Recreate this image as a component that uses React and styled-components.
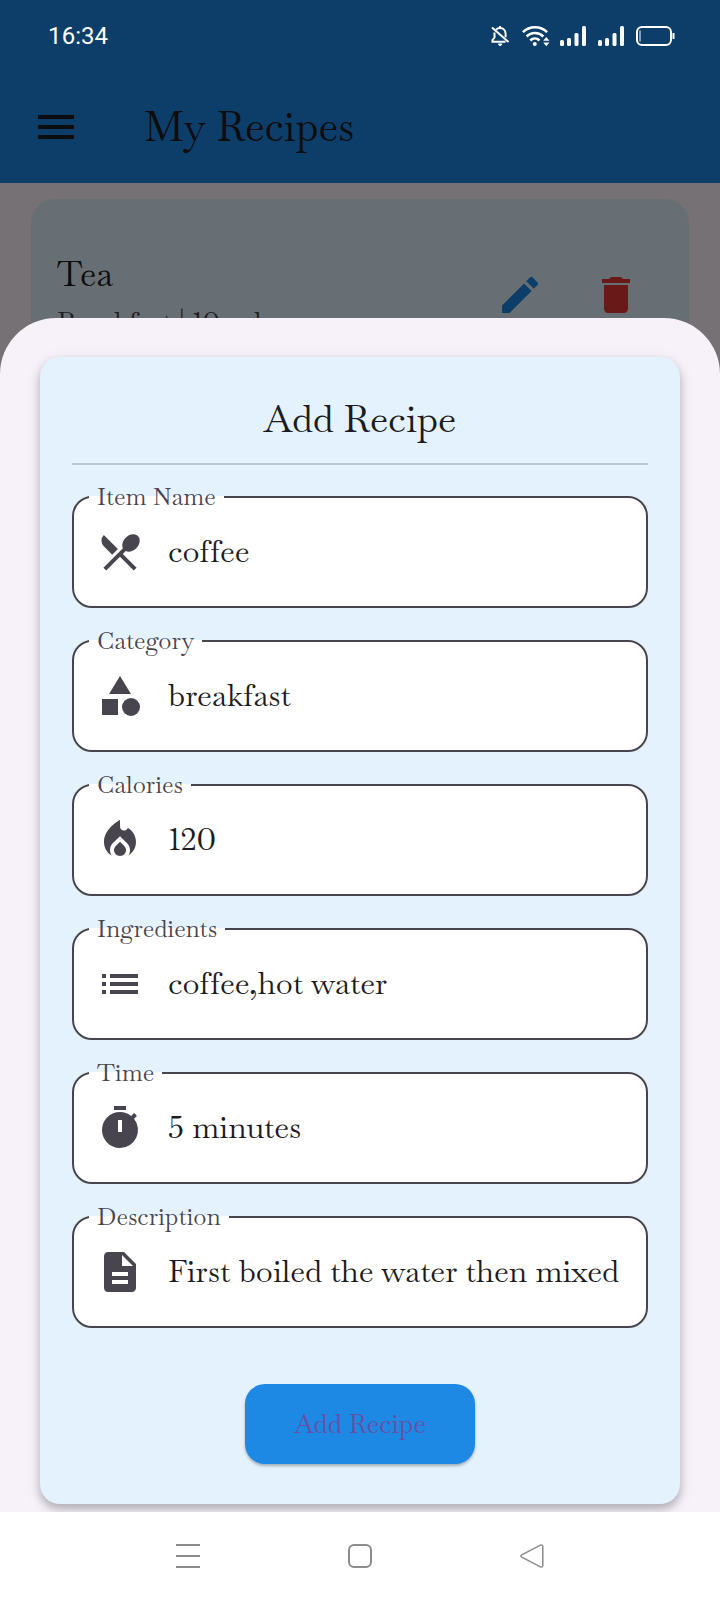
import React from "react";
import styled, { createGlobalStyle } from "styled-components";
import {
  MdCategory,
  MdDelete,
  MdDescription,
  MdEdit,
  MdList,
  MdLocalFireDepartment,
  MdMenu,
  MdRestaurantMenu,
  MdTimer,
} from "react-icons/md";

const serif = '"Baskervville", "Liberation Serif", serif';

const GlobalStyle = createGlobalStyle`
  *, *::before, *::after { box-sizing: border-box; }
  body { margin: 0; font-family: ${serif}; background: #ffffff; color: #1d1b20; }
  body, input, button { font-variant-ligatures: none; font-variant-numeric: lining-nums; }
`;

const Screen = styled.div`
  display: flex;
  flex-direction: column;
  min-height: 100vh;
`;

/* The page, its scrim, the sheet and the status bar share one grid cell. */
const Stage = styled.div`
  flex: 1;
  display: grid;
  grid-template-columns: minmax(0, 1fr);

  & > * { grid-area: 1 / 1; }
`;

const RecipesPage = styled.main`
  background: #fef7ff;
`;

const AppBar = styled.header`
  display: flex;
  align-items: center;
  gap: 64px;
  height: 183px;
  padding: 71px 32px 0;
  background: #1e88e5;
`;

const AppTitle = styled.h1`
  margin: 0;
  font-size: 41px;
  font-weight: 400;
  line-height: 48px;
`;

const IconButton = styled.button`
  display: flex;
  padding: 0;
  border: 0;
  background: none;
  font-size: 48px;
  color: ${({ $color }) => $color};
`;

const RecipeCard = styled.article`
  display: flex;
  align-items: center;
  gap: 48px;
  height: 192px;
  margin: 16px 31px;
  padding: 0 49px 0 26px;
  border-radius: 24px;
  background: #e3f2fd;
`;

const RecipeText = styled.div`
  flex: 1;
  align-self: flex-start;
  min-width: 0;
  padding-top: 53px;
`;

const RecipeName = styled.h2`
  margin: 0;
  font-size: 34px;
  font-weight: 400;
  line-height: 44px;
`;

const RecipeMeta = styled.p`
  margin: 4px 0 0;
  font-size: 28px;
  line-height: 44px;
  color: #49454f;
`;

const Scrim = styled.div`
  background: rgba(0, 0, 0, 0.54);
`;

const StatusBar = styled.div`
  align-self: start;
  display: flex;
  align-items: center;
  justify-content: space-between;
  height: 71px;
  padding: 0 45px 0 48px;
  color: #ffffff;
`;

const Clock = styled.time`
  font-family: Roboto, sans-serif;
  font-size: 24px;
  font-weight: 400;
`;

const StatusIcons = styled.div`
  display: flex;
  align-items: center;
  gap: 12px;

  svg { display: block; overflow: visible; }
`;

const Sheet = styled.section`
  margin-top: 318px;
  padding: 39px 40px 8px;
  border-radius: 56px 56px 0 0;
  background: #f7f2fa;
  overflow: hidden;
`;

const FormCard = styled.form`
  padding: 38px 32px 40px;
  border-radius: 20px;
  background: #e3f2fd;
  box-shadow: 0 5px 8px rgba(0, 0, 0, 0.22), 0 4px 16px rgba(0, 0, 0, 0.1);
`;

const FormTitle = styled.h2`
  margin: 0 0 20px;
  padding-bottom: 20px;
  border-bottom: 2px solid #bfc6d6;
  font-size: 38px;
  font-weight: 400;
  line-height: 48px;
  text-align: center;
`;

const Fields = styled.div`
  display: grid;
  gap: 21px;
`;

const Outline = styled.fieldset`
  min-width: 0;
  height: 123px;
  margin: 0;
  padding: 0 22px;
  border: 2px solid #49454f;
  border-radius: 20px;
  background: #ffffff;
`;

const Legend = styled.legend`
  margin-left: -7px;
  padding: 0 8px;
  font-size: 24px;
  line-height: 24px;
  color: #49454f;
`;

const InputRow = styled.div`
  display: flex;
  align-items: center;
  gap: 24px;
  padding-top: 19px;
  color: #49454f;

  svg { flex: none; }
`;

const TextInput = styled.input`
  flex: 1;
  min-width: 0;
  height: 48px;
  padding: 0 0 2px;
  border: 0;
  outline: 0;
  background: none;
  font-family: ${serif};
  font-size: 31px;
  color: #1d1b20;
`;

const SubmitButton = styled.button`
  display: block;
  width: 230px;
  height: 80px;
  margin: 56px auto 0;
  border: 0;
  border-radius: 20px;
  background: #1e88e5;
  box-shadow: 0 2px 3px rgba(0, 0, 0, 0.28);
  font-family: ${serif};
  font-size: 26px;
  color: #6750a4;
`;

const NavBar = styled.nav`
  display: flex;
  align-items: center;
  justify-content: center;
  gap: 148px;
  height: 88px;
  background: #ffffff;
`;

const NavButton = styled.button`
  display: flex;
  padding: 0;
  border: 0;
  background: none;
  color: #8c8c8c;
`;

const BellOff = () => (
  <svg width="20" height="20" viewBox="0 0 20 20" fill="none" stroke="currentColor" strokeWidth="2">
    <path d="M2 1.5 18.5 16" />
    <path d="M6 3.6C7.1 2.5 8.4 2 10 2c3.400 0 5.600 2.400 5.600 5.800v3.400" />
    <path d="M4.500 6.500v5L2.500 14v1.800h13" />
    <path d="M10 0v2" />
    <path d="M8.300 18h3.800L10.200 20z" fill="currentColor" strokeWidth="1" />
  </svg>
);

const Wifi = () => (
  <svg width="26" height="20" viewBox="0 0 26 20" fill="none" stroke="currentColor" strokeWidth="2.600">
    <path d="M.9 6.200C7.500-.4 18.500-.4 25.100 6.200" />
    <path d="M4.600 10.500c4.600-4.600 12.200-4.600 16.800 0" />
    <path d="M8.300 14.500c2.600-2.600 6.500-2.600 9.200 0" />
    <circle cx="12.800" cy="18" r="2" fill="currentColor" stroke="none" />
    <path d="M21.200 14.800 24.300 11l3.100 3.800zM21.200 16.400 24.300 20.200l3.100-3.800z" fill="currentColor" stroke="none" />
  </svg>
);

const Signal = () => (
  <svg width="26" height="20" viewBox="0 0 26 20" fill="currentColor">
    <rect x="0" y="14" width="4" height="6" rx="1.500" />
    <rect x="7" y="12" width="4" height="8" rx="1.500" />
    <rect x="14.500" y="7" width="4" height="13" rx="1.500" />
    <rect x="22" y="0" width="4" height="20" rx="1.500" />
  </svg>
);

const Battery = () => (
  <svg width="39" height="20" viewBox="0 0 39 20" fill="none" stroke="currentColor">
    <rect x="1" y="1" width="34" height="18" rx="5" strokeWidth="2" />
    <path d="M4 4.500v11" strokeWidth="1" />
    <path d="M37.500 7v6" strokeWidth="2" />
  </svg>
);

const fields = [
  { id: "name", label: "Item Name", value: "coffee", Icon: MdRestaurantMenu },
  { id: "category", label: "Category", value: "breakfast", Icon: MdCategory },
  { id: "calories", label: "Calories", value: "120", Icon: MdLocalFireDepartment },
  { id: "ingredients", label: "Ingredients", value: "coffee,hot water", Icon: MdList },
  { id: "time", label: "Time", value: "5 minutes", Icon: MdTimer },
  { id: "description", label: "Description", value: "First boiled the water then mixed", Icon: MdDescription },
];

function Field({ id, label, value, Icon }) {
  return (
    <Outline>
      <Legend>
        <label htmlFor={id}>{label}</label>
      </Legend>
      <InputRow>
        <Icon size={48} aria-hidden="true" />
        <TextInput id={id} type="text" defaultValue={value} />
      </InputRow>
    </Outline>
  );
}

export default function App() {
  return (
    <Screen>
      <GlobalStyle />
      <Stage>
        <RecipesPage>
          <AppBar>
            <IconButton type="button" aria-label="Open menu" $color="#1d1b20">
              <MdMenu />
            </IconButton>
            <AppTitle>My Recipes</AppTitle>
          </AppBar>
          <RecipeCard>
            <RecipeText>
              <RecipeName>Tea</RecipeName>
              <RecipeMeta>Breakfast | 10 cal</RecipeMeta>
            </RecipeText>
            <IconButton type="button" aria-label="Edit Tea" $color="#1e88e5">
              <MdEdit />
            </IconButton>
            <IconButton type="button" aria-label="Delete Tea" $color="#e53935">
              <MdDelete />
            </IconButton>
          </RecipeCard>
        </RecipesPage>
        <Scrim />
        <StatusBar>
          <Clock>16:34</Clock>
          <StatusIcons aria-hidden="true">
            <BellOff />
            <Wifi />
            <Signal />
            <Signal />
            <Battery />
          </StatusIcons>
        </StatusBar>
        <Sheet role="dialog" aria-labelledby="sheet-title">
          <FormCard onSubmit={(event) => event.preventDefault()}>
            <FormTitle id="sheet-title">Add Recipe</FormTitle>
            <Fields>
              {fields.map((field) => (
                <Field key={field.id} {...field} />
              ))}
            </Fields>
            <SubmitButton type="submit">Add Recipe</SubmitButton>
          </FormCard>
        </Sheet>
      </Stage>
      <NavBar>
        <NavButton type="button" aria-label="Recent apps">
          <svg width="24" height="24" viewBox="0 0 24 24" stroke="currentColor" strokeWidth="2">
            <path d="M0 1h24M0 12h24M0 23h24" />
          </svg>
        </NavButton>
        <NavButton type="button" aria-label="Home">
          <svg width="24" height="24" viewBox="0 0 24 24" fill="none" stroke="currentColor" strokeWidth="2">
            <rect x="1" y="1" width="22" height="22" rx="5" />
          </svg>
        </NavButton>
        <NavButton type="button" aria-label="Back">
          <svg width="24" height="24" viewBox="0 0 24 24" fill="none" stroke="currentColor" strokeWidth="1.500">
            <path d="M20.500 1.200 1.700 10.800c-1.100.6-1.100 1.800 0 2.400l18.800 9.600c1.200.6 2.300 0 2.300-1.300V2.500c0-1.300-1.100-1.900-2.300-1.300z" />
          </svg>
        </NavButton>
      </NavBar>
    </Screen>
  );
}
